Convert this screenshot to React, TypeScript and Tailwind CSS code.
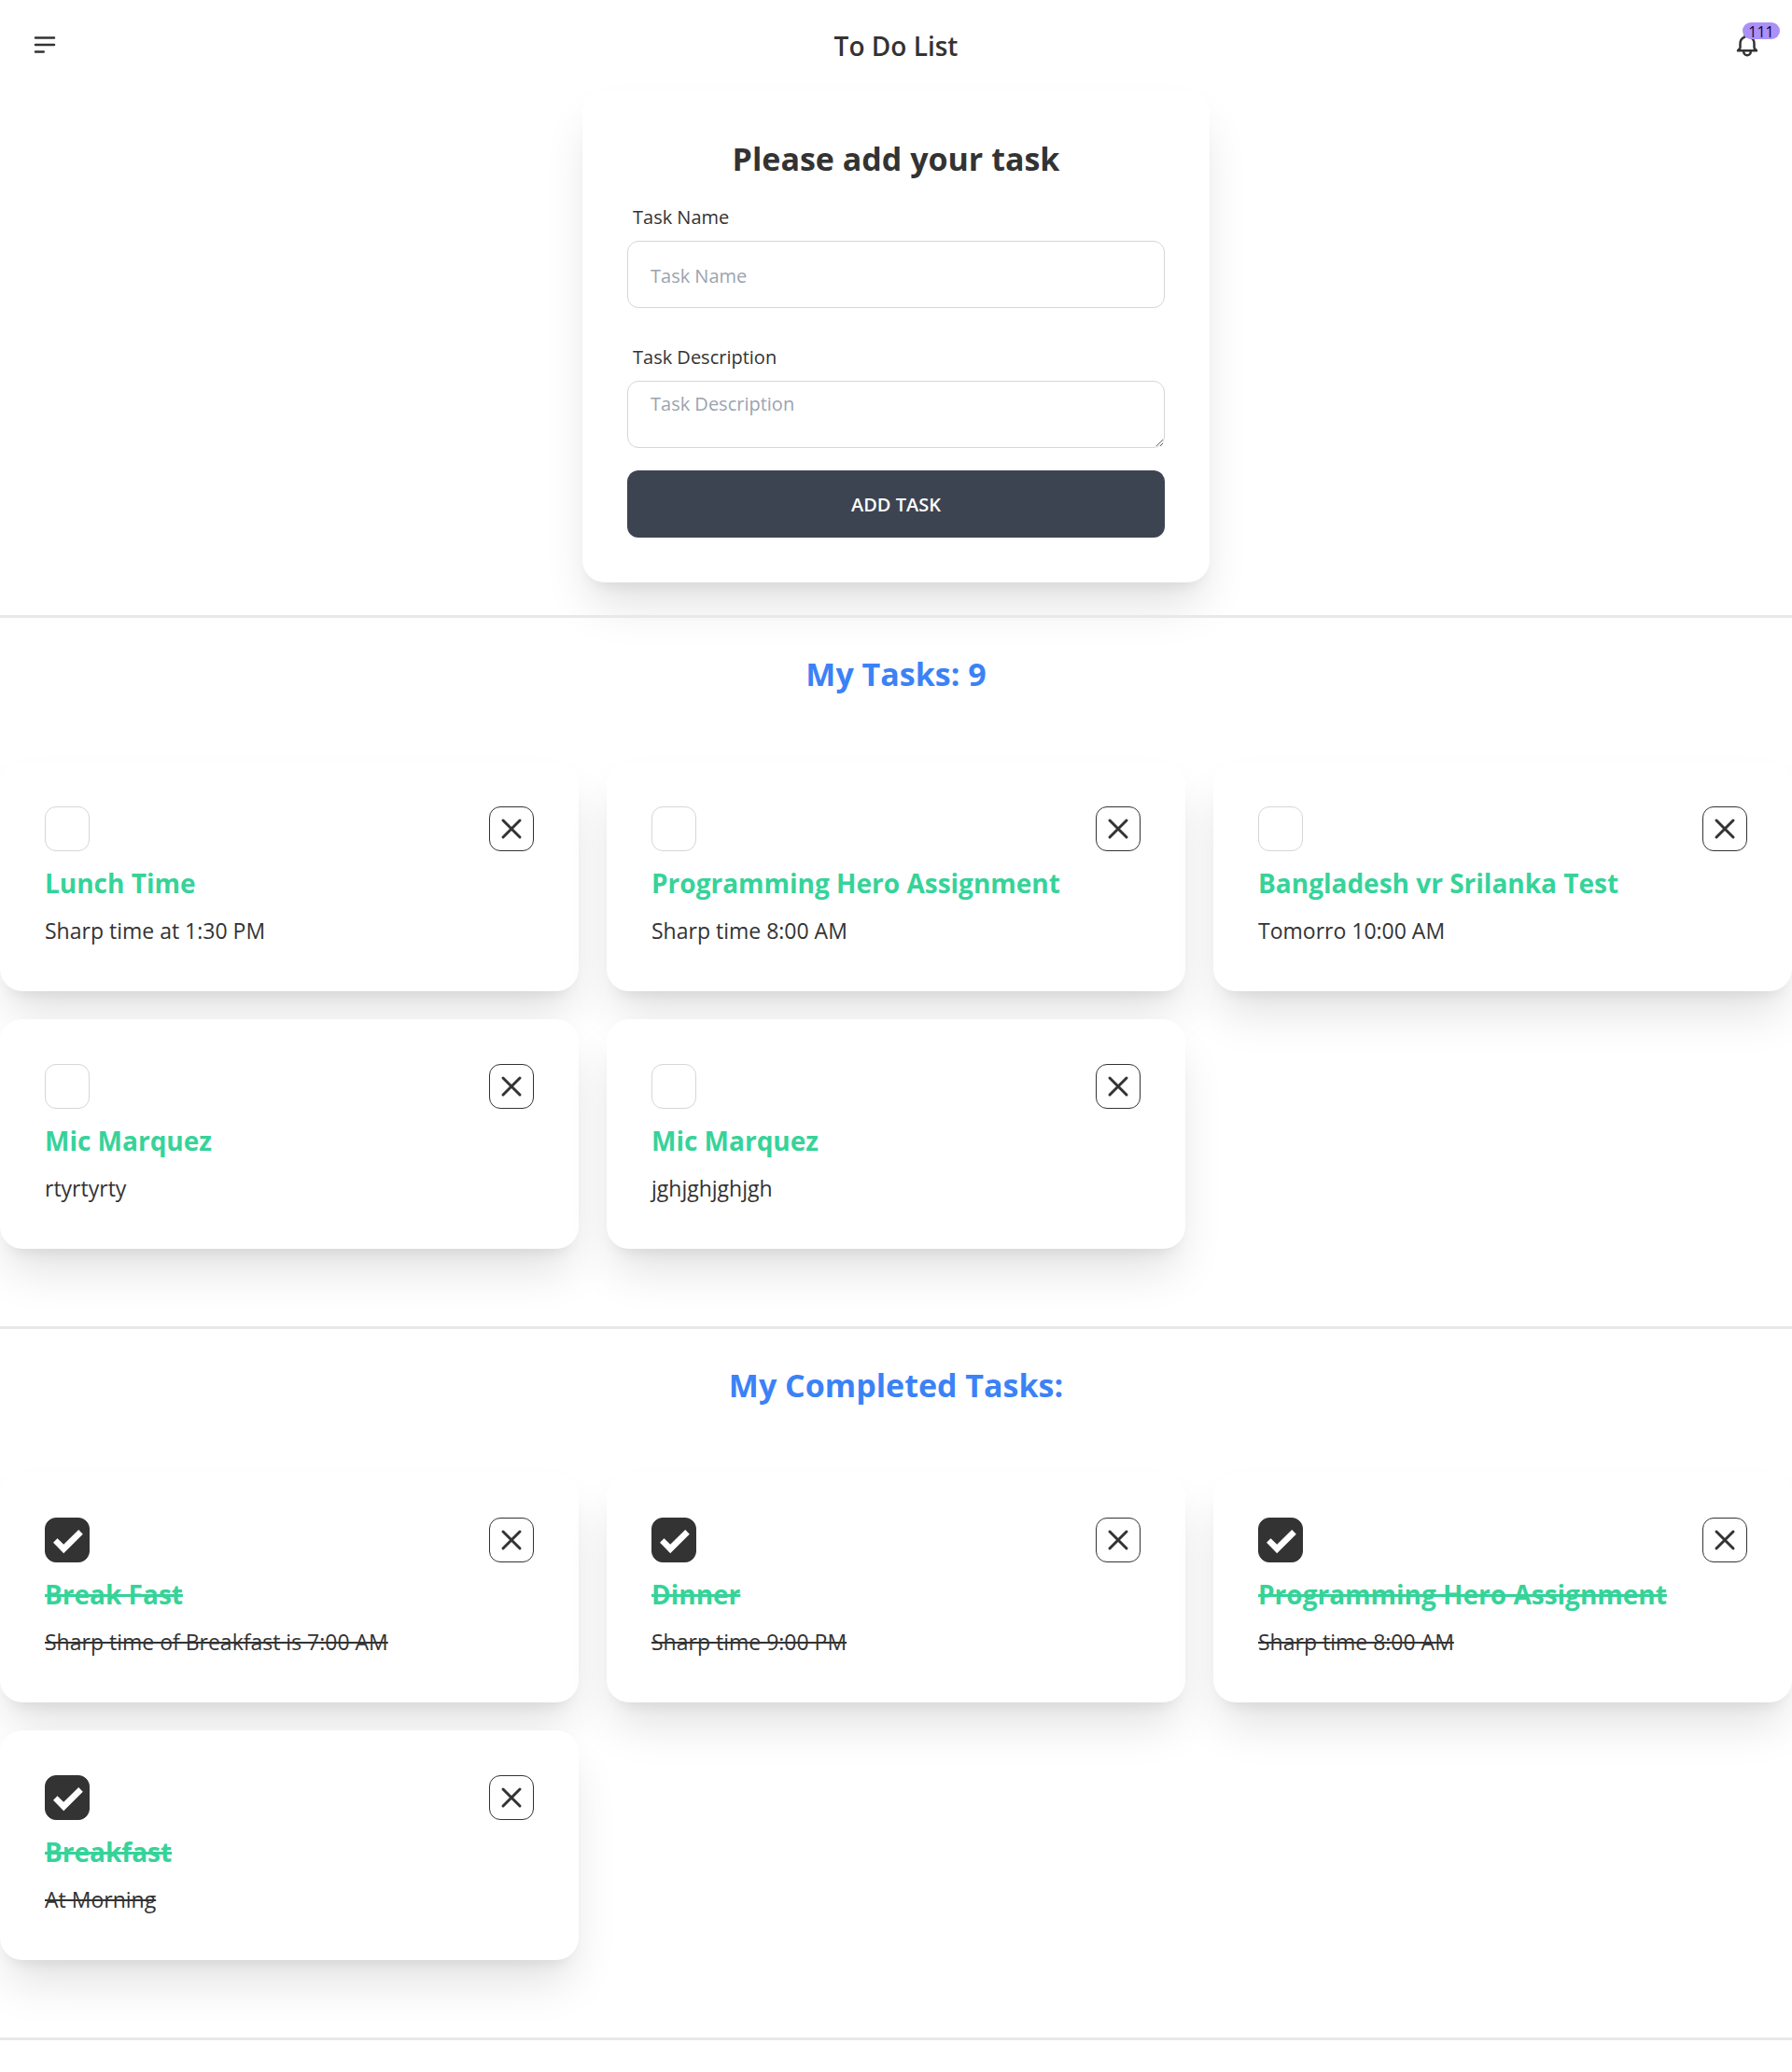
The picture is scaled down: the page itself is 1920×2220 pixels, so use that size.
import { useState } from "react";

type Task = { id: number; name: string; description: string; done: boolean };

const initialTasks: Task[] = [
  { id: 1, name: "Lunch Time", description: "Sharp time at 1:30 PM", done: false },
  { id: 2, name: "Programming Hero Assignment", description: "Sharp time 8:00 AM", done: false },
  { id: 3, name: "Bangladesh vr Srilanka Test", description: "Tomorro 10:00 AM", done: false },
  { id: 4, name: "Mic Marquez", description: "rtyrtyrty", done: false },
  { id: 5, name: "Mic Marquez", description: "jghjghjghjgh", done: false },
  { id: 6, name: "Break Fast", description: "Sharp time of Breakfast is 7:00 AM", done: true },
  { id: 7, name: "Dinner", description: "Sharp time 9:00 PM", done: true },
  { id: 8, name: "Programming Hero Assignment", description: "Sharp time 8:00 AM", done: true },
  { id: 9, name: "Breakfast", description: "At Morning", done: true },
];

const cardShadow = "shadow-[0_30px_50px_-8px_rgba(0,0,0,0.12),0_12px_15px_-9px_rgba(0,0,0,0.08)]";

function Navbar() {
  return (
    <header className="flex h-24 items-center justify-between px-3">
      <button type="button" aria-label="Menu" className="flex size-[72px] items-center justify-center rounded-full">
        <svg className="size-[30px]" viewBox="0 0 24 24" fill="none" stroke="currentColor" strokeWidth="2" strokeLinecap="round" strokeLinejoin="round">
          <path d="M4 6h16M4 12h16M4 18h7" />
        </svg>
      </button>
      <a href="#" className="pt-0.5 text-[28px] leading-9 font-semibold">To Do List</a>
      <button type="button" aria-label="Notifications" className="flex size-[72px] items-center justify-center rounded-full">
        <span className="relative">
          <svg className="size-[30px]" viewBox="0 0 24 24" fill="none" stroke="currentColor" strokeWidth="2" strokeLinecap="round" strokeLinejoin="round">
            <path d="M15 17h5l-1.405-1.405A2.032 2.032 0 0118 14.158V11a6.002 6.002 0 00-4-5.659V5a2 2 0 10-4 0v.341C7.67 6.165 6 8.388 6 11v3.159c0 .538-.214 1.055-.595 1.436L4 17h5m6 0v1a3 3 0 11-6 0v-1m6 0H9" />
          </svg>
          <span className="absolute top-0 right-0 flex h-[18px] w-10 translate-x-1/2 -translate-y-1/2 items-center justify-center rounded-full bg-[#a991f7] pt-0.5 text-base leading-none font-medium text-[#180048]">111</span>
        </span>
      </button>
    </header>
  );
}

function TaskForm({ onAdd }: { onAdd: (name: string, description: string) => void }) {
  const [name, setName] = useState("");
  const [description, setDescription] = useState("");
  return (
    <form
      className={`mx-auto flex w-full max-w-2xl flex-col rounded-3xl bg-white p-12 ${cardShadow}`}
      onSubmit={(e) => {
        e.preventDefault();
        if (name.trim()) {
          onAdd(name, description);
          setName("");
          setDescription("");
        }
      }}
    >
      <h2 className="mb-2 text-center text-[34px] leading-[52px] font-bold">Please add your task</h2>
      <label htmlFor="task-name" className="px-1.5 pt-3.5 pb-2.5 text-xl leading-[30px]">Task Name</label>
      <input
        id="task-name"
        value={name}
        onChange={(e) => setName(e.target.value)}
        placeholder="Task Name"
        className="h-[72px] rounded-xl border border-[#d6d6d6] bg-white px-6 pt-0.5 text-xl placeholder:text-[#9ca3af]"
      />
      <label htmlFor="task-description" className="mt-6 px-1.5 pt-3.5 pb-2.5 text-xl leading-[30px]">Task Description</label>
      <textarea
        id="task-description"
        value={description}
        onChange={(e) => setDescription(e.target.value)}
        placeholder="Task Description"
        className="h-[72px] resize rounded-xl border border-[#d6d6d6] bg-white px-6 py-2 text-xl leading-8 placeholder:text-[#9ca3af]"
      />
      <button type="submit" className="mt-6 h-[72px] rounded-xl bg-[#3d4451] pt-0.5 text-xl font-semibold text-white uppercase">Add Task</button>
    </form>
  );
}

function TaskCard({ task, onToggle, onRemove }: { task: Task; onToggle: () => void; onRemove: () => void }) {
  return (
    <article className={`flex flex-col gap-3 rounded-3xl bg-white p-12 ${cardShadow}`}>
      <div className="flex justify-between">
        <span className="relative size-12">
          <input
            type="checkbox"
            checked={task.done}
            onChange={onToggle}
            aria-label={`Mark ${task.name} as completed`}
            className="block size-12 appearance-none rounded-xl border border-[#d6d6d6] checked:border-[#333333] checked:bg-[#333333]"
          />
          {task.done && (
            <svg className="pointer-events-none absolute inset-0 size-12" viewBox="0 0 48 48" fill="#ffffff">
              <path d="M9 26.8L13.5 22.2L20.2 28.8L36.2 13L40.8 17.7L20.2 38.2Z" />
            </svg>
          )}
        </span>
        <button type="button" onClick={onRemove} aria-label={`Delete ${task.name}`} className="flex size-12 items-center justify-center rounded-xl border border-[#333333]">
          <svg className="size-9" viewBox="0 0 24 24" fill="none" stroke="currentColor" strokeWidth="2" strokeLinecap="round" strokeLinejoin="round">
            <path d="M6 18L18 6M6 6l12 12" />
          </svg>
        </button>
      </div>
      <h3 className={`text-[28px] leading-[44px] font-bold text-[#36d399] ${task.done ? "line-through decoration-3" : ""}`}>{task.name}</h3>
      <p className={`text-[23px] leading-[34px] ${task.done ? "line-through decoration-2" : ""}`}>{task.description}</p>
    </article>
  );
}

export default function App() {
  const [tasks, setTasks] = useState(initialTasks);
  const toggle = (id: number) => setTasks(tasks.map((t) => (t.id === id ? { ...t, done: !t.done } : t)));
  const remove = (id: number) => setTasks(tasks.filter((t) => t.id !== id));
  const add = (name: string, description: string) =>
    setTasks([...tasks, { id: Date.now(), name, description, done: false }]);

  const section = (title: string, items: Task[]) => (
    <section className="border-t-3 border-[#e8e8e8] pt-9 pb-[83px]">
      <h2 className="mb-[70px] text-center text-[34px] leading-[48px] font-bold text-[#3b82f6]">{title}</h2>
      <div className="grid grid-cols-1 gap-[30px] md:grid-cols-2 lg:grid-cols-3">
        {items.map((t) => (
          <TaskCard key={t.id} task={t} onToggle={() => toggle(t.id)} onRemove={() => remove(t.id)} />
        ))}
      </div>
    </section>
  );

  return (
    <div className="min-h-screen overflow-x-clip bg-white font-['Open_Sans',sans-serif] text-[#333333]">
      <Navbar />
      <main>
        <div className="pb-[35px]">
          <TaskForm onAdd={add} />
        </div>
        {section(`My Tasks: ${tasks.length}`, tasks.filter((t) => !t.done))}
        {section("My Completed Tasks:", tasks.filter((t) => t.done))}
        <hr className="border-t-3 border-[#e8e8e8]" />
      </main>
    </div>
  );
}
